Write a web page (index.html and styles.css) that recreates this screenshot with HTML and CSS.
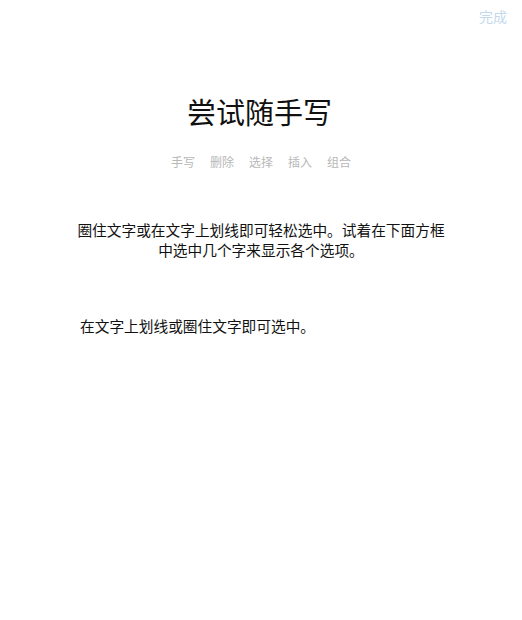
FILE: index.html
```html
<!DOCTYPE html>
<html lang="zh">
<head>
<meta charset="utf-8">
<link rel="stylesheet" href="styles.css">
</head>
<body>
<div class="page">
  <div class="topbar"><span class="done">完成</span></div>
  <h1 class="title">尝试随手写</h1>
  <div class="tabs">
    <span>手写</span><span>删除</span><span>选择</span><span>插入</span><span>组合</span>
  </div>
  <p class="intro">圈住文字或在文字上划线即可轻松选中。试着在下面方框<br>中选中几个字来显示各个选项。</p>
  <p class="sample">在文字上划线或圈住文字即可选中。</p>
</div>
</body>
</html>
```
FILE: styles.css
```css
html, body {
  margin: 0;
  padding: 0;
  background: #ffffff;
}
body {
  font-family: "Noto Sans CJK SC", "Noto Sans", sans-serif;
  color: #111111;
}
.page {
  width: 522px;
  height: 620px;
  display: flex;
  flex-direction: column;
  align-items: center;
}
.topbar {
  align-self: stretch;
  display: flex;
  justify-content: flex-end;
  padding: 6px 15px 0 0;
  height: 22px;
}
.done {
  font-size: 14px;
  line-height: 20px;
  color: #c3d9ec;
}
.title {
  margin: 65px 3px 0 0;
  font-size: 29px;
  font-weight: 400;
  line-height: 36px;
  letter-spacing: 0;
}
.tabs {
  margin-top: 25px;
  display: flex;
  gap: 15px;
  font-size: 12px;
  line-height: 16px;
  color: #b8b8b8;
}
.intro {
  margin: 50px 0 0 0;
  width: 440px;
  text-align: center;
  font-size: 14.7px;
  line-height: 20px;
  white-space: nowrap;
}
.sample {
  align-self: flex-start;
  margin: 56px 0 0 80px;
  font-size: 14.7px;
  line-height: 20px;
}
```
